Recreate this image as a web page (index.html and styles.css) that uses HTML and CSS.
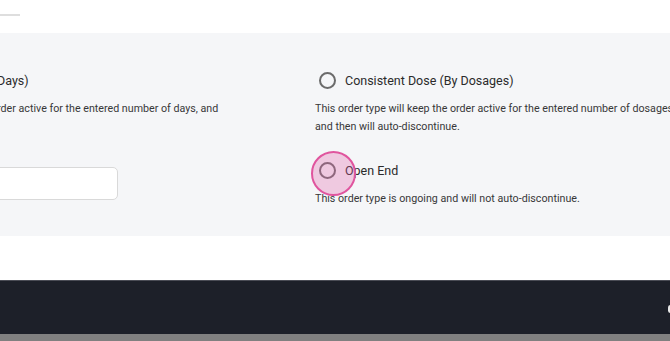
FILE: index.html
```html
<!DOCTYPE html>
<html lang="en">
<head>
  <title>Order Type</title>
<link rel="stylesheet" href="styles.css">
</head>
<body>

<div class="top">
  <div class="top__line"></div>
</div>

<div class="panel">
  <div class="choices">

    <div class="choice">
      <label class="option option--wide">
        <span class="radio"></span>
        <span class="option__label">Fixed Duration (By Days)</span>
      </label>
      <p class="choice__text">This order type will keep the order active for the entered number of days, and then will auto-discontinue.</p>
      <div class="field"></div>
    </div>

    <div class="choice">
      <label class="option">
        <span class="radio"></span>
        <span class="option__label">Consistent Dose (By Dosages)</span>
      </label>
      <p class="choice__text">This order type will keep the order active for the entered number of dosages and then will auto-discontinue.</p>

      <label class="option option--second">
        <span class="radio"></span>
        <span class="option__label">Open End</span>
        <span class="click"></span>
      </label>
      <p class="choice__text">This order type is ongoing and will not auto-discontinue.</p>
    </div>

  </div>
</div>

<div class="gap"></div>

<footer class="footer">
  <span class="footer__dot"></span>
</footer>
<div class="bottom"></div>

</body>
</html>
```

FILE: styles.css
```css
body {
  margin: 0;
  font-family: Roboto, 'Liberation Sans', sans-serif;
  background-color: white;
  overflow: hidden;
}

.top {
  height: 33px;
  padding-top: 14px;
  box-sizing: border-box;
}

.top__line {
  width: 20px;
  height: 2px;
  background-color: #dedede;
}

.panel {
  height: 203px;
  background-color: #f5f6f8;
  padding-top: 37px;
  box-sizing: border-box;
  overflow: hidden;
}

.choices {
  display: grid;
  grid-template-columns: 364px 364px;
  column-gap: 95px;
  margin-left: -144px;
}

.option {
  position: relative;
  display: flex;
  align-items: center;
  height: 20px;
  padding-left: 4px;
}

.option--wide {
  padding-left: 11px;
}

.option--second {
  margin-top: 24px;
}

.radio {
  width: 17px;
  height: 17px;
  border: 2px solid #6b6b6b;
  border-radius: 50%;
  box-sizing: border-box;
  margin-right: 9px;
}

.option__label {
  font-size: 12.5px;
  color: #2b2b2b;
}

.choice__text {
  margin: 10px 0 0 0;
  font-size: 10.7px;
  line-height: 18px;
  color: #383838;
}

.field {
  margin-top: 31px;
  height: 33px;
  margin-left: -50px;
  width: 312px;
  background-color: white;
  border: 1px solid #d9d9d9;
  border-radius: 5px;
  box-sizing: border-box;
}

/* click marker drawn over the radio */
.click {
  position: absolute;
  left: -4px;
  top: -9px;
  width: 45px;
  height: 45px;
  border: 2px solid #e0559e;
  border-radius: 50%;
  background-color: rgba(226, 96, 170, 0.3);
  box-sizing: border-box;
}

.gap {
  height: 44px;
}

.footer {
  position: relative;
  height: 54px;
  background-color: #1d2029;
  border-top: 1px solid #4a4c55;
  box-sizing: border-box;
}

.footer__dot {
  position: absolute;
  right: -3px;
  top: 24px;
  width: 5px;
  height: 8px;
  border-radius: 3px;
  background-color: #e8e8e8;
}

.bottom {
  height: 7px;
  background-color: #808080;
}
```
